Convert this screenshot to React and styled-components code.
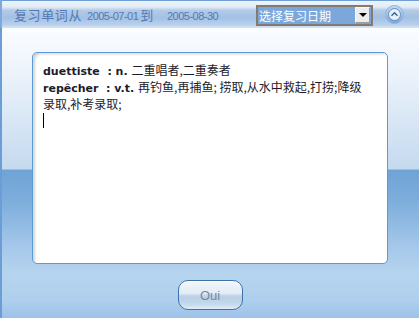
import React from "react";
import styled, { createGlobalStyle } from "styled-components";

const GlobalStyle = createGlobalStyle`
  html, body {
    margin: 0;
    padding: 0;
    overflow: hidden;
    background: #ffffff;
  }
`;

const Window = styled.div`
  width: 419px;
  height: 318px;
  display: flex;
  flex-direction: column;
  box-sizing: border-box;
  font-family: "Liberation Sans", "Noto Sans CJK SC", sans-serif;
`;

const TitleBar = styled.div`
  height: 28px;
  box-sizing: border-box;
  display: flex;
  align-items: center;
  padding: 0 15px 0 12px;
  border-top: 1px solid #6f9fd6;
  border-left: 2px solid #7eaadb;
  background: linear-gradient(
    to bottom,
    #eef4fb 0%,
    #e2ecf7 22%,
    #b3cbe8 34%,
    #a3c1e4 62%,
    #b8d0eb 88%,
    #d8e6f5 100%
  );
`;

const Title = styled.div`
  display: flex;
  align-items: baseline;
  color: #5579b2;
  flex: 1;
  white-space: nowrap;
`;

const TitleCn = styled.span`
  font-family: "Noto Sans CJK SC", sans-serif;
  font-size: 13px;
  letter-spacing: 0.6px;
  margin-right: ${(p) => p.$gap || 0}px;
`;

const TitleNum = styled.span`
  font-family: "Liberation Sans", sans-serif;
  font-size: 11px;
  letter-spacing: -0.5px;
  margin-right: ${(p) => p.$gap || 0}px;
`;

const Select = styled.div`
  width: 117px;
  height: 21px;
  box-sizing: border-box;
  border: 2px solid #847a6e;
  background: #7ba7db;
  display: flex;
  align-items: center;
  padding-left: 1px;
  margin-right: 12px;
  margin-top: 1px;
`;

const SelectText = styled.span`
  flex: 1;
  color: #ffffff;
  font-family: "Noto Sans CJK SC", sans-serif;
  font-size: 12px;
  line-height: 17px;
`;

const DropButton = styled.div`
  width: 15px;
  height: 16px;
  box-sizing: border-box;
  margin-right: 1px;
  background: #ececec;
  border: 1px solid #9a9a9a;
  border-top-color: #f8f8f8;
  border-left-color: #f8f8f8;
  display: flex;
  align-items: center;
  justify-content: center;
`;

const Arrow = styled.span`
  width: 0;
  height: 0;
  border-left: 4px solid transparent;
  border-right: 4px solid transparent;
  border-top: 4px solid #000;
`;

const CircleButton = styled.div`
  width: 19px;
  height: 19px;
  display: flex;
  align-items: center;
  justify-content: center;
`;

const Body = styled.div`
  flex: 1;
  display: flex;
  flex-direction: column;
  padding: 24px 31px 0 32px;
  border-left: 2px solid #6a9ed5;
  box-sizing: border-box;
  background: linear-gradient(
    to bottom,
    #fbfdff 0%,
    #e9f1fa 18%,
    #d4e4f4 35%,
    #c5daef 48.6%,
    #6fa3d6 49%,
    #7eaedc 60%,
    #a4c7ea 75%,
    #b6d4ee 85%,
    #aecfed 94%,
    #9dc2e8 100%
  );
`;

const Editor = styled.div`
  height: 212px;
  margin-left: -2px;
  box-sizing: border-box;
  background: #ffffff;
  border: 1px solid #5a9ad8;
  border-radius: 5px;
  box-shadow: inset 4px 3px 3px -2px rgba(0, 0, 0, 0.18);
  padding: 8px 10px;
  color: #1c1c2c;
`;

const Line = styled.div`
  height: 17px;
  line-height: 17px;
  white-space: pre;
  font-family: "Noto Sans CJK SC", sans-serif;
  font-size: 12px;
`;

const Term = styled.span`
  font-family: "DejaVu Sans", sans-serif;
  font-weight: bold;
  font-size: 11px;
`;

const Caret = styled.div`
  width: 1px;
  height: 15px;
  margin-top: 1px;
  background: #000;
`;

const Footer = styled.div`
  display: flex;
  justify-content: center;
  padding-top: 16px;
  margin-left: -2px;
`;

const Button = styled.div`
  width: 65px;
  height: 30px;
  box-sizing: border-box;
  border: 1.5px solid #3f72a8;
  border-radius: 10px;
  display: flex;
  align-items: center;
  justify-content: center;
  color: #7488aa;
  font-family: "Liberation Sans", sans-serif;
  font-size: 13px;
  background: linear-gradient(
    to bottom,
    #f3f7fc 0%,
    #e2ebf5 45%,
    #c7d8ea 50%,
    #b9cfe6 60%,
    #c8dbee 85%,
    #e2edf7 100%
  );
  box-shadow: inset 0 1px 0 rgba(255, 255, 255, 0.8);
`;

function UpIcon() {
  return (
    <svg width="19" height="19" viewBox="0 0 19 19">
      <defs>
        <linearGradient id="ring" x1="0" y1="0" x2="0" y2="1">
          <stop offset="0" stopColor="#c9dcf0" />
          <stop offset="1" stopColor="#7aa5d6" />
        </linearGradient>
      </defs>
      <circle cx="9.5" cy="9.5" r="9" fill="url(#ring)" stroke="#8fb3dc" strokeWidth="1" />
      <circle cx="9.5" cy="9.5" r="6" fill="#e8f0f9" stroke="#5f8ec6" strokeWidth="1" />
      <path d="M6.5 10.8 L9.5 7.8 L12.5 10.8" fill="none" stroke="#3d6aa6" strokeWidth="1.6" />
    </svg>
  );
}

export default function App() {
  return (
    <Window>
      <GlobalStyle />
      <TitleBar>
        <Title>
          <TitleCn $gap={5}>复习单词从</TitleCn>
          <TitleNum $gap={2}>2005-07-01</TitleNum>
          <TitleCn $gap={13}>到</TitleCn>
          <TitleNum>2005-08-30</TitleNum>
        </Title>
        <Select>
          <SelectText>选择复习日期</SelectText>
          <DropButton>
            <Arrow />
          </DropButton>
        </Select>
        <CircleButton>
          <UpIcon />
        </CircleButton>
      </TitleBar>
      <Body>
        <Editor>
          <Line>
            <Term>duettiste  : n. </Term>二重唱者,二重奏者
          </Line>
          <Line>
            <Term>repêcher  : v.t. </Term>再钓鱼,再捕鱼; 捞取,从水中救起,打捞;降级
          </Line>
          <Line>录取,补考录取;</Line>
          <Caret />
        </Editor>
        <Footer>
          <Button>Oui</Button>
        </Footer>
      </Body>
    </Window>
  );
}
